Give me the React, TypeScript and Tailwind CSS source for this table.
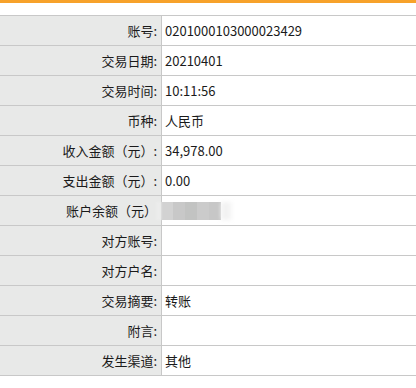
import React from 'react'

const rows: [string, string][] = [
  ['账号:', '0201000103000023429'],
  ['交易日期:', '20210401'],
  ['交易时间:', '10:11:56'],
  ['币种:', '人民币'],
  ['收入金额（元）:', '34,978.00'],
  ['支出金额（元）:', '0.00'],
  ['账户余额（元）', ''],
  ['对方账号:', ''],
  ['对方户名:', ''],
  ['交易摘要:', '转账'],
  ['附言:', ''],
  ['发生渠道:', '其他'],
]

// masked balance, drawn as soft grey blocks
function Blurred () {
  return (
    <div className="relative flex h-[18px] -ml-[9px]">
      <div className="w-[5px] bg-[#ececec] blur-[1px]" />
      <div className="w-[12px] bg-[#d2d2d2]" />
      <div className="w-[12px] bg-[#c8c8c8]" />
      <div className="w-[12px] bg-[#c2c3c2]" />
      <div className="w-[12px] bg-[#cbcbcb]" />
      <div className="w-[12px] bg-[#c7c7c7]" />
      <div className="w-[10px] bg-[#f2f2f2] blur-[2px]" />
    </div>
  )
}

export default function App (): JSX.Element {
  return (
    <div className="w-[416px] h-[388px] bg-white text-[13px] text-[#1a1a1a]" style={{ fontFamily: '"Microsoft YaHei", "Noto Sans CJK SC", sans-serif' }}>
      <div className="h-[3px] bg-[#f7a22a]" />
      <div className="h-[12px]" />
      <div className="border-t border-[#c8c8c8]">
        {rows.map(([label, value]) => (
          <div key={label} className="flex h-[30px] border-b border-[#c8c8c8]">
            <div className="w-[162px] shrink-0 bg-[#e8e9e8] border-r border-[#c8c8c8] flex items-center justify-end pr-[4px]">
              {label}
            </div>
            <div className="relative flex-1 flex items-center pl-[3px]">
              {label === '账户余额（元）' ? <Blurred /> : value}
            </div>
          </div>
        ))}
      </div>
    </div>
  )
}
